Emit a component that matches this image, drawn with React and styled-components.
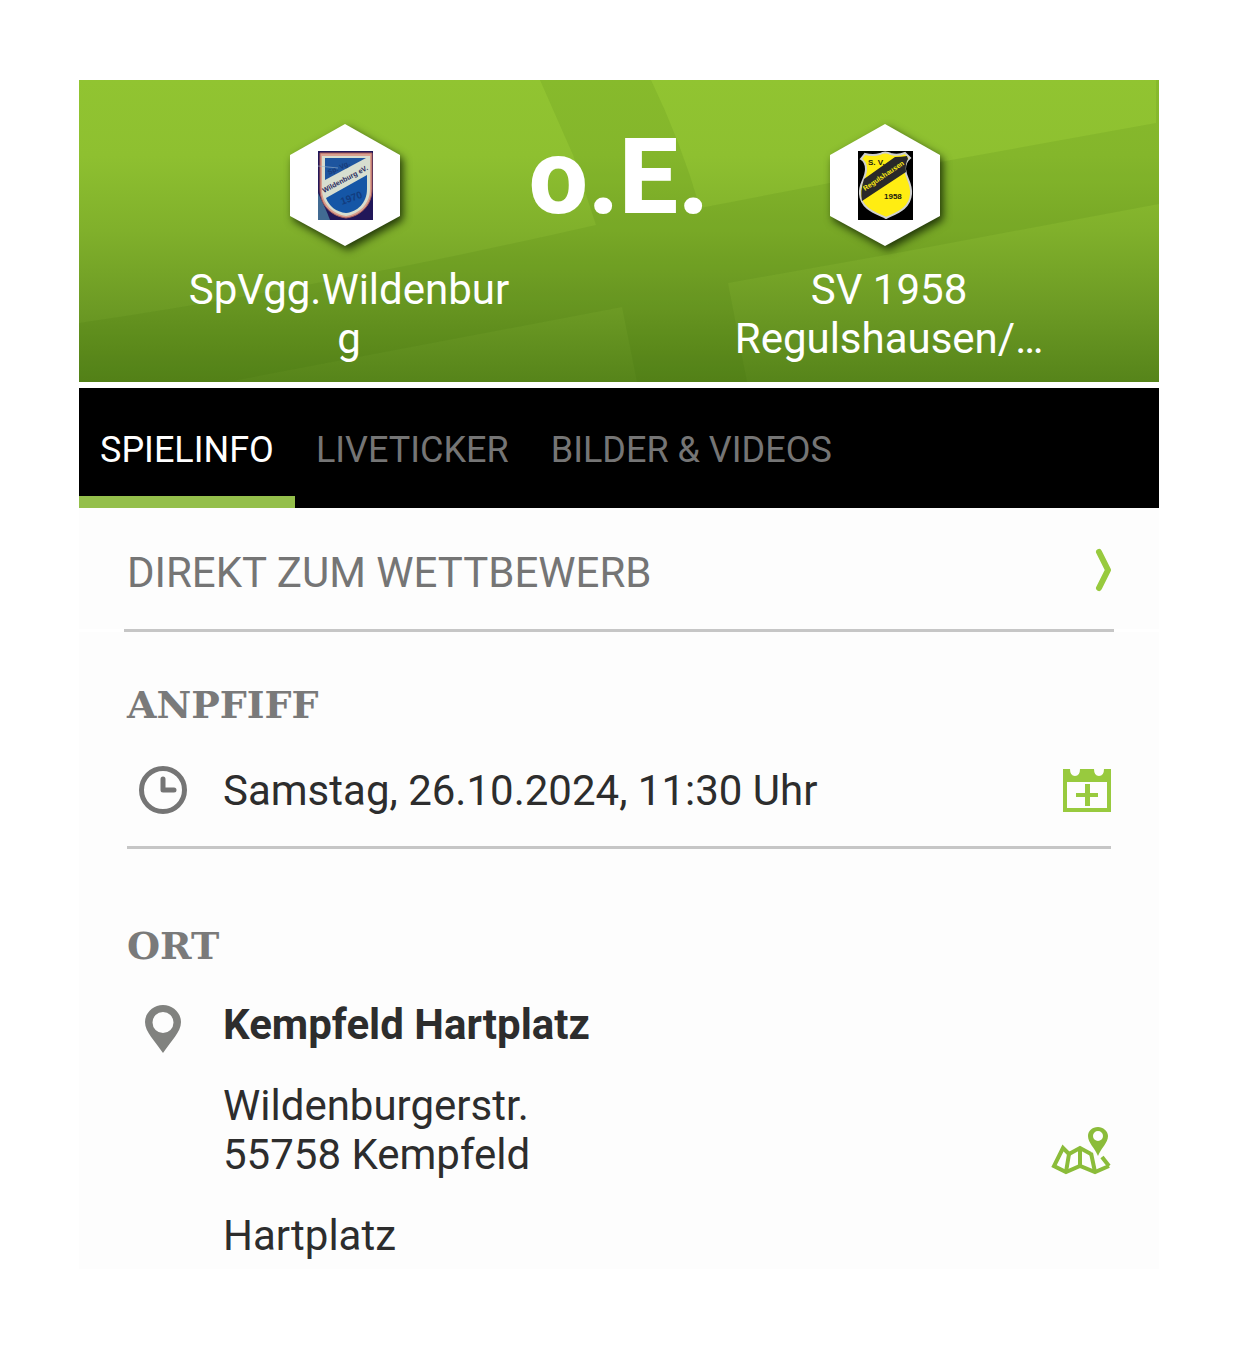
import React from 'react';
import styled, { createGlobalStyle } from 'styled-components';

const GlobalStyle = createGlobalStyle`
  * {
    box-sizing: border-box;
  }

  body {
    margin: 0;
    background-color: #ffffff;
    color: #2d2d2d;
    font-family: Roboto, 'Liberation Sans', sans-serif;
    font-size: 42px;
    line-height: 49px;
  }
`;

const Page = styled.main`
  padding: 80px 78px 80px 79px;
`;

const Hero = styled.header`
  position: relative;
  display: grid;
  grid-template-columns: 328px 1fr 328px;
  padding: 36px 106px 19px;
  background: linear-gradient(#91c431 0%, #8ec030 25%, #80b02b 50%, #6c9a24 76%, #56841a 100%);
  color: white;
`;

const HeroPattern = styled.svg`
  position: absolute;
  inset: 0;
  width: 100%;
  height: 100%;
`;

const Team = styled.div`
  position: relative;
  display: flex;
  flex-direction: column;
  align-items: center;
  gap: 11px;
  padding-top: 8px;
`;

const TeamName = styled.span`
  width: 100%;
  text-align: center;
  overflow-wrap: anywhere;
`;

const Score = styled.strong`
  position: relative;
  text-align: center;
  white-space: nowrap;
  font-size: 105px;
  line-height: 123px;
  font-weight: 800;
`;

const Tabs = styled.nav`
  display: flex;
  height: 120px;
  margin-top: 6px;
  background-color: black;
`;

const Tab = styled.button`
  padding: 15px 21px 0;
  border: none;
  border-bottom: 12px solid ${props => (props.$active ? '#94bf4b' : 'transparent')};
  background: none;
  color: ${props => (props.$active ? 'white' : '#757575')};
  font-family: inherit;
  font-size: 36px;
  line-height: 42px;
  white-space: nowrap;
  cursor: pointer;
`;

const CompetitionLink = styled.a`
  display: flex;
  justify-content: space-between;
  align-items: flex-start;
  padding: 40px 48px 32px;
  background-color: #fdfdfd;
  color: #757575;
  text-decoration: none;
`;

const Divider = styled.hr`
  height: 3px;
  margin: 0 ${props => props.$inset}px;
  border: none;
  background-color: #c6c6c6;
`;

const Panel = styled.div`
  background-color: #fdfdfd;
`;

const Section = styled.section`
  padding: ${props => (props.$spaced ? '73px 48px 9px' : '49px 48px 31px')};
`;

const Heading = styled.h2`
  margin: 0 0 ${props => (props.$tight ? 30 : 37)}px;
  color: #7a7a7a;
  font-family: 'DejaVu Serif', serif;
  font-size: 38px;
  line-height: 48px;
  font-weight: 700;
`;

const Details = styled.div`
  display: grid;
  grid-template-columns: 72px 1fr 60px;
  gap: 32px 24px;
  align-items: center;
`;

const Label = styled.span`
  grid-column: 2;
  font-weight: ${props => (props.$bold ? 700 : 400)};
`;

const LeadIcon = styled.svg`
  justify-self: center;
  align-self: start;
`;

const PinIcon = styled(LeadIcon)`
  grid-row: 1 / span 2;
  margin-top: 5px;
`;

const IconButton = styled.button`
  display: flex;
  grid-column: 3;
  justify-self: end;
  align-self: ${props => (props.$low ? 'end' : 'center')};
  padding: 0 0 ${props => (props.$low ? 4 : 0)}px;
  border: none;
  background: none;
  cursor: pointer;
`;

const CrestSvg = styled.svg`
  overflow: visible;
  font-family: 'Liberation Sans', sans-serif;
  font-weight: 700;
`;

const Hexagon = styled.path`
  filter: drop-shadow(3px 4px 4px rgba(10, 25, 0, 0.8));
`;

function Crest({ label, children }) {
  return (
    <CrestSvg width="118" height="130" viewBox="0 0 118 130" role="img" aria-label={label}>
      <Hexagon d="M55 0 110 31V92L55 122 0 92V31Z" fill="white" />
      <g transform="translate(28 27)">{children}</g>
    </CrestSvg>
  );
}

function WildenburgCrest() {
  return (
    <Crest label="SpVgg. Wildenburg">
      <path d="M0 0H55V69H0Z" fill="#211759" />
      <path d="M0 42Q8 58 12 69H0Z" fill="#416a92" />
      <path d="M2 2H54V38C54 54 43 65 28 67C13 65 2 54 2 38Z" fill="#d9a08e" stroke="#a85b5b" strokeWidth="1" />
      <path d="M4 5H52V38C52 53 41 63 28 65C15 63 4 53 4 38Z" fill="#d7ded0" />
      <path d="M7 7H48L7 29Z" fill="#1d559f" />
      <path d="M8 47 49 24V38C49 52 39 61 28 62C18 61 11 55 8 47Z" fill="#1556a6" />
      <path d="M0 15 20 17" stroke="#9eb7cc" strokeWidth="1" opacity="0.6" />
      <text transform="translate(11 24) rotate(-25)" fontSize="7" fill="#173b78">Sp. Vg.</text>
      <text transform="translate(6 42) rotate(-28)" fontSize="7" fill="#26285c">Wildenburg eV.</text>
      <text transform="translate(24 54) rotate(-20)" fontSize="10" fill="#123c7e">1970</text>
    </Crest>
  );
}

function RegulshausenCrest() {
  return (
    <Crest label="SV 1958 Regulshausen">
      <path d="M0 0H55V69H0Z" fill="#000000" />
      <path
        d="M7 3Q15 5 22 3Q27 0 33 3Q40 5 47 2L52 7Q47 11 47 18C48 28 54 32 53 43C52 58 38 62 28 67C18 62 3 58 2 43C1 32 8 28 8 18Q8 11 3 8Z"
        fill="#ffed12"
        stroke="#cfd0d0"
        strokeWidth="2"
      />
      <path d="M6 28 37 6Q43 6 49 5L50 8Q47 12 48 21L4 50Q2 40 6 28Z" fill="#292929" />
      <text x="10" y="14" fontSize="8" fill="#1c1c10">S. V.</text>
      <text transform="translate(7 40) rotate(-34)" fontSize="7" fill="#ffed12">Regulshausen</text>
      <text x="26" y="48" fontSize="8" fill="#1c1c10">1958</text>
    </Crest>
  );
}

function App() {
  return (
    <React.Fragment>
      <GlobalStyle />
      <Page>
        <Hero>
          <HeroPattern viewBox="0 0 1080 302" preserveAspectRatio="none" aria-hidden="true">
            <path
              d="M461 0H572Q602 62 621 128L861 82 1077 43V0H1080V124L818 173 649 203 668 302H558L543 227 148 302H0V243Q250 206 517 145L494 75Z"
              fill="#346400"
              opacity="0.1"
            />
          </HeroPattern>
          <Team>
            <WildenburgCrest />
            <TeamName>SpVgg.Wildenburg</TeamName>
          </Team>
          <Score>o.E.</Score>
          <Team>
            <RegulshausenCrest />
            <TeamName>SV 1958 Regulshausen/…</TeamName>
          </Team>
        </Hero>

        <Tabs>
          <Tab $active>SPIELINFO</Tab>
          <Tab>LIVETICKER</Tab>
          <Tab>BILDER &amp; VIDEOS</Tab>
        </Tabs>

        <CompetitionLink href="#wettbewerb">
          DIREKT ZUM WETTBEWERB
          <svg width="16" height="44" viewBox="0 0 16 44" fill="none" aria-hidden="true">
            <path d="M4 4 13 22 4 40" stroke="#98ca3e" strokeWidth="6" strokeLinecap="round" strokeLinejoin="round" />
          </svg>
        </CompetitionLink>
        <Divider $inset={45} />

        <Panel>
          <Section>
            <Heading>ANPFIFF</Heading>
            <Details>
              <LeadIcon width="48" height="48" viewBox="0 0 48 48" fill="none" stroke="#757575" aria-hidden="true">
                <circle cx="24" cy="24" r="21.5" strokeWidth="5" />
                <path d="M24 13V24H35" strokeWidth="5" strokeLinecap="round" strokeLinejoin="round" />
              </LeadIcon>
              <Label>Samstag, 26.10.2024, 11:30 Uhr</Label>
              <IconButton aria-label="Zum Kalender hinzufügen">
                <svg width="48" height="43" viewBox="0 0 48 43" fill="#98ca3e">
                  <path
                    fillRule="evenodd"
                    d="M0 0H7Q7 7 12 7T17 0H31Q31 7 36 7T41 0H48V43H0ZM4 13V39H44V13Z"
                  />
                  <path d="M22 15H27V24H35V28H27V37H22V28H13V24H22Z" />
                </svg>
              </IconButton>
            </Details>
          </Section>
          <Divider $inset={48} />

          <Section $spaced>
            <Heading $tight>ORT</Heading>
            <Details>
              <PinIcon width="36" height="48" viewBox="0 0 36 48" aria-hidden="true">
                <path
                  fill="#81827f"
                  fillRule="evenodd"
                  d="M18 0C8 0 0 8 0 17C0 27 10 36 18 48C26 36 36 27 36 17C36 8 28 0 18 0ZM18 7A10.5 10.5 0 1 1 18 28A10.5 10.5 0 1 1 18 7Z"
                />
              </PinIcon>
              <Label $bold>Kempfeld Hartplatz</Label>
              <Label>
                Wildenburgerstr.
                <br />
                55758 Kempfeld
              </Label>
              <IconButton $low aria-label="Karte öffnen">
                <svg width="60" height="49" viewBox="0 0 60 49" fill="none" stroke="#8bbc3a" strokeWidth="4">
                  <path d="M40 28 29 22 18 28 12 22 3 40 15 46 29 40 44 46 58 40M58 40 51 31" />
                  <path d="M18 28 15 46M29 22V40M40 27 44 46" />
                  <path
                    fill="#8bbc3a"
                    stroke="none"
                    fillRule="evenodd"
                    d="M47 1C41 1 37 5 37 10C37 17 44 22 47 30C50 22 57 17 57 10C57 5 52 1 47 1ZM47 5A5 5 0 1 1 47 15A5 5 0 1 1 47 5Z"
                  />
                </svg>
              </IconButton>
              <Label>Hartplatz</Label>
            </Details>
          </Section>
        </Panel>
      </Page>
    </React.Fragment>
  );
}

export default App;
